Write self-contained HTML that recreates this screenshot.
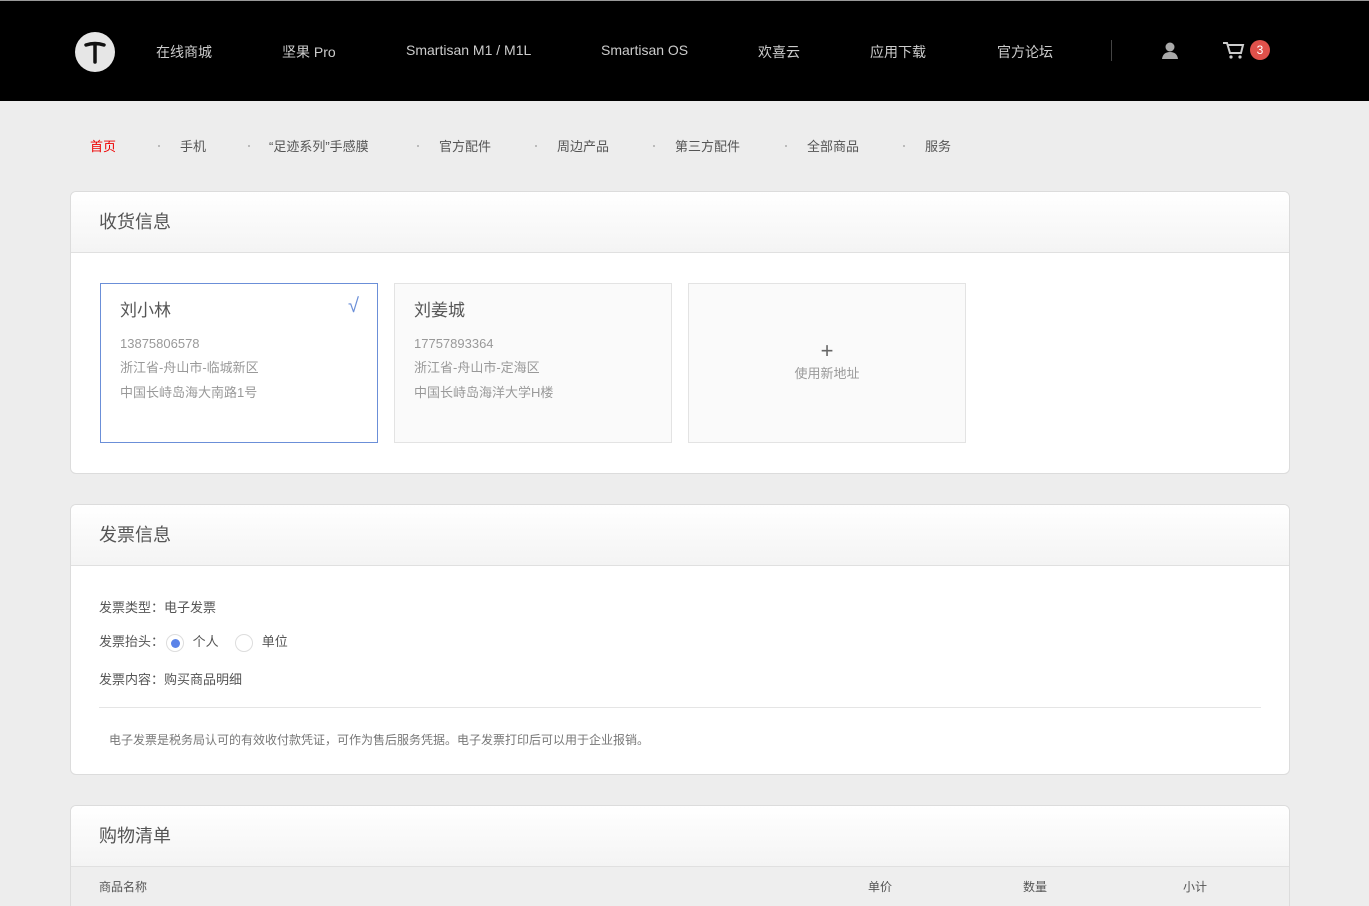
<!DOCTYPE html>
<html><head><meta charset="utf-8"><style>
*{margin:0;padding:0;box-sizing:border-box}
html,body{width:1369px;height:906px;overflow:hidden}
body{background:#ededed;font-family:"Liberation Sans","Noto Sans CJK SC",sans-serif;position:relative}
.top{position:absolute;left:0;top:0;width:1369px;height:101px;background:#000;border-top:1px solid #999}
.logo{position:absolute;left:75px;top:31px;width:40px;height:40px;border-radius:50%;background:#e6e6e6}
.nav a{position:absolute;top:41px;color:#ccc;font-size:14px;text-decoration:none}
.sub span{position:absolute;top:136px;font-size:13px;color:#555}
.sub i{position:absolute;top:145px;width:2px;height:2px;background:#bbb}
.panel{position:absolute;left:70px;width:1220px;background:#fff;border:1px solid #dcdcdc;border-radius:6px;overflow:hidden}
.ph{height:61px;background:linear-gradient(#fff,#f4f4f4);border-bottom:1px solid #e0e0e0;font-size:18px;color:#555;padding:16px 0 0 28px}
.card{position:absolute;top:91px;width:278px;height:160px;background:#fafafa;border:1px solid #e3e3e3;padding:15px 0 0 19px;color:#999;font-size:13px;line-height:24.5px}
.card b{display:block;font-weight:normal;font-size:17px;color:#555;margin-bottom:8px}
.row{position:absolute;left:28px;font-size:13px;color:#555}
.rad{display:inline-block;width:18px;height:18px;border-radius:50%;border:1px solid #ddd;background:#fff;vertical-align:middle;position:relative;margin:0 5px 0 2px}
.rad.on:after{content:"";position:absolute;left:4px;top:4px;width:9px;height:9px;border-radius:50%;background:#5b83e8}
</style></head><body>
<div class="top">
<div class="logo"><svg width="40" height="40"><path d="M11 13 Q20 10 29 13 M20 12 V30" stroke="#111" stroke-width="3.5" stroke-linecap="round" fill="none"/></svg></div>
<div class="nav">
<a style="left:156px">在线商城</a><a style="left:282px">坚果 Pro</a><a style="left:406px">Smartisan M1 / M1L</a><a style="left:601px">Smartisan OS</a><a style="left:758px">欢喜云</a><a style="left:870px">应用下载</a><a style="left:997px">官方论坛</a>
</div>
<div style="position:absolute;left:1111px;top:39px;width:1px;height:21px;background:#444"></div>
<svg style="position:absolute;left:1160px;top:40px" width="20" height="20"><circle cx="10" cy="6" r="4.5" fill="#aaa"/><path d="M2 18 Q3 11 10 11 Q17 11 18 18Z" fill="#aaa"/></svg>
<svg style="position:absolute;left:1222px;top:39px" width="24" height="20"><path d="M1 3 H5 L8 13 H19 L21 5 H6" stroke="#ccc" stroke-width="2" fill="none"/><circle cx="9" cy="17" r="1.6" fill="#ccc"/><circle cx="18" cy="17" r="1.6" fill="#ccc"/></svg>
<div style="position:absolute;left:1250px;top:39px;width:20px;height:20px;border-radius:50%;background:#e0514b;color:#fff;font-size:12px;text-align:center;line-height:20px">3</div>
</div>
<div class="sub">
<span style="left:90px;color:#e00">首页</span><i style="left:158px"></i><span style="left:180px">手机</span><i style="left:248px"></i><span style="left:269px">“足迹系列”手感膜</span><i style="left:417px"></i><span style="left:439px">官方配件</span><i style="left:535px"></i><span style="left:557px">周边产品</span><i style="left:653px"></i><span style="left:675px">第三方配件</span><i style="left:785px"></i><span style="left:807px">全部商品</span><i style="left:903px"></i><span style="left:925px">服务</span>
</div>
<div class="panel" style="top:191px;height:283px">
<div class="ph">收货信息</div>
<div class="card" style="left:29px;background:#fff;border-color:#6b8fd8"><b>刘小林</b>13875806578<br>浙江省-舟山市-临城新区<br>中国长峙岛海大南路1号<span style="position:absolute;right:18px;top:10px;color:#6b8fd8;font-size:20px">√</span></div>
<div class="card" style="left:323px"><b>刘姜城</b>17757893364<br>浙江省-舟山市-定海区<br>中国长峙岛海洋大学H楼</div>
<div class="card" style="left:617px;text-align:center;padding:56px 0 0"><div style="font-size:22px;color:#666;line-height:22px">+</div>使用新地址</div>
</div>
<div class="panel" style="top:504px;height:271px">
<div class="ph">发票信息</div>
<div class="row" style="top:92px">发票类型：电子发票</div>
<div class="row" style="top:126px">发票抬头：<span class="rad on"></span> 个人 &nbsp;&nbsp;&nbsp;<span class="rad"></span> 单位</div>
<div class="row" style="top:164px">发票内容：购买商品明细</div>
<div style="position:absolute;left:28px;right:28px;top:202px;border-top:1px solid #e5e5e5"></div>
<div class="row" style="top:226px;left:38px;font-size:12px;color:#777">电子发票是税务局认可的有效收付款凭证，可作为售后服务凭据。电子发票打印后可以用于企业报销。</div>
</div>
<div class="panel" style="top:805px;height:120px">
<div class="ph">购物清单</div>
<div style="height:40px;background:#eee;font-size:12px;color:#555;position:relative">
<span style="position:absolute;left:28px;top:11px">商品名称</span><span style="position:absolute;left:797px;top:11px">单价</span><span style="position:absolute;left:952px;top:11px">数量</span><span style="position:absolute;left:1112px;top:11px">小计</span></div>
</div>
</body></html>
